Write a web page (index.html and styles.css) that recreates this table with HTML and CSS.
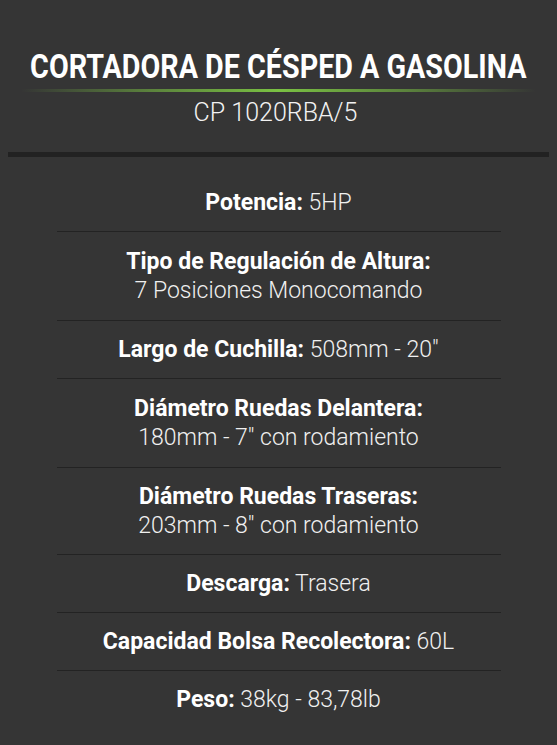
FILE: index.html
```html
<!DOCTYPE html>
<html lang="es">
<head>
<meta charset="utf-8">
<title>Cortadora de césped a gasolina</title>
<link rel="stylesheet" href="styles.css">
</head>
<body>
<div class="page">
  <header class="head">
    <h1 class="title"><span class="title-text">CORTADORA DE CÉSPED A GASOLINA</span></h1>
    <div class="glow"></div>
    <p class="model">CP 1020RBA/5</p>
  </header>
  <div class="bar"></div>
  <ul class="specs">
    <li class="spec"><b>Potencia:</b> 5HP</li>
    <li class="spec spec-tall"><b>Tipo de Regulación de Altura:</b><br>7 Posiciones Monocomando</li>
    <li class="spec"><b>Largo de Cuchilla:</b> 508mm - 20″</li>
    <li class="spec spec-tall"><b>Diámetro Ruedas Delantera:</b><br>180mm - 7″ con rodamiento</li>
    <li class="spec"><b>Diámetro Ruedas Traseras:</b><br>203mm - 8″ con rodamiento</li>
    <li class="spec"><b>Descarga:</b> Trasera</li>
    <li class="spec"><b>Capacidad Bolsa Recolectora:</b> 60L</li>
    <li class="spec"><b>Peso:</b> 38kg - 83,78lb</li>
  </ul>
</div>
</body>
</html>
```
FILE: styles.css
```css
html, body {
  margin: 0;
  padding: 0;
  background: #353535;
}
body {
  font-family: Roboto, "Liberation Sans", sans-serif;
  color: #fff;
}
.page {
  width: 557px;
  min-height: 745px;
  padding: 0 8px;
  box-sizing: border-box;
}
.head {
  padding-top: 48px;
  display: flex;
  flex-direction: column;
  align-items: center;
}
.title {
  margin: 0;
  font-size: 33px;
  font-weight: 700;
  line-height: 38px;
  white-space: nowrap;
  text-align: center;
}
.title-text {
  display: inline-block;
  transform: scaleX(0.87);
}
.glow {
  width: 515px;
  height: 3px;
  margin-top: 3px;
  background: linear-gradient(to right, rgba(122,193,67,0) 0%, rgba(122,193,67,0.55) 25%, #7ac143 50%, rgba(122,193,67,0.55) 75%, rgba(122,193,67,0) 100%);
}
.model {
  margin: 6px 0 0 -6px;
  font-size: 25px;
  font-weight: 300;
  line-height: 30px;
  color: #f2f2f2;
}
.bar {
  height: 5px;
  margin-top: 24px;
  background: #222;
}
.specs {
  list-style: none;
  margin: 17px auto 0;
  padding: 0;
  width: 444px;
}
.spec {
  padding: 14px 0;
  border-bottom: 1px solid #232323;
  text-align: center;
  font-size: 23px;
  line-height: 29px;
  font-weight: 300;
  color: #f0f0f0;
}
.spec-tall {
  padding: 15px 0;
}
.spec:last-child {
  border-bottom: none;
}
.spec b {
  font-weight: 700;
  color: #fff;
}
```
